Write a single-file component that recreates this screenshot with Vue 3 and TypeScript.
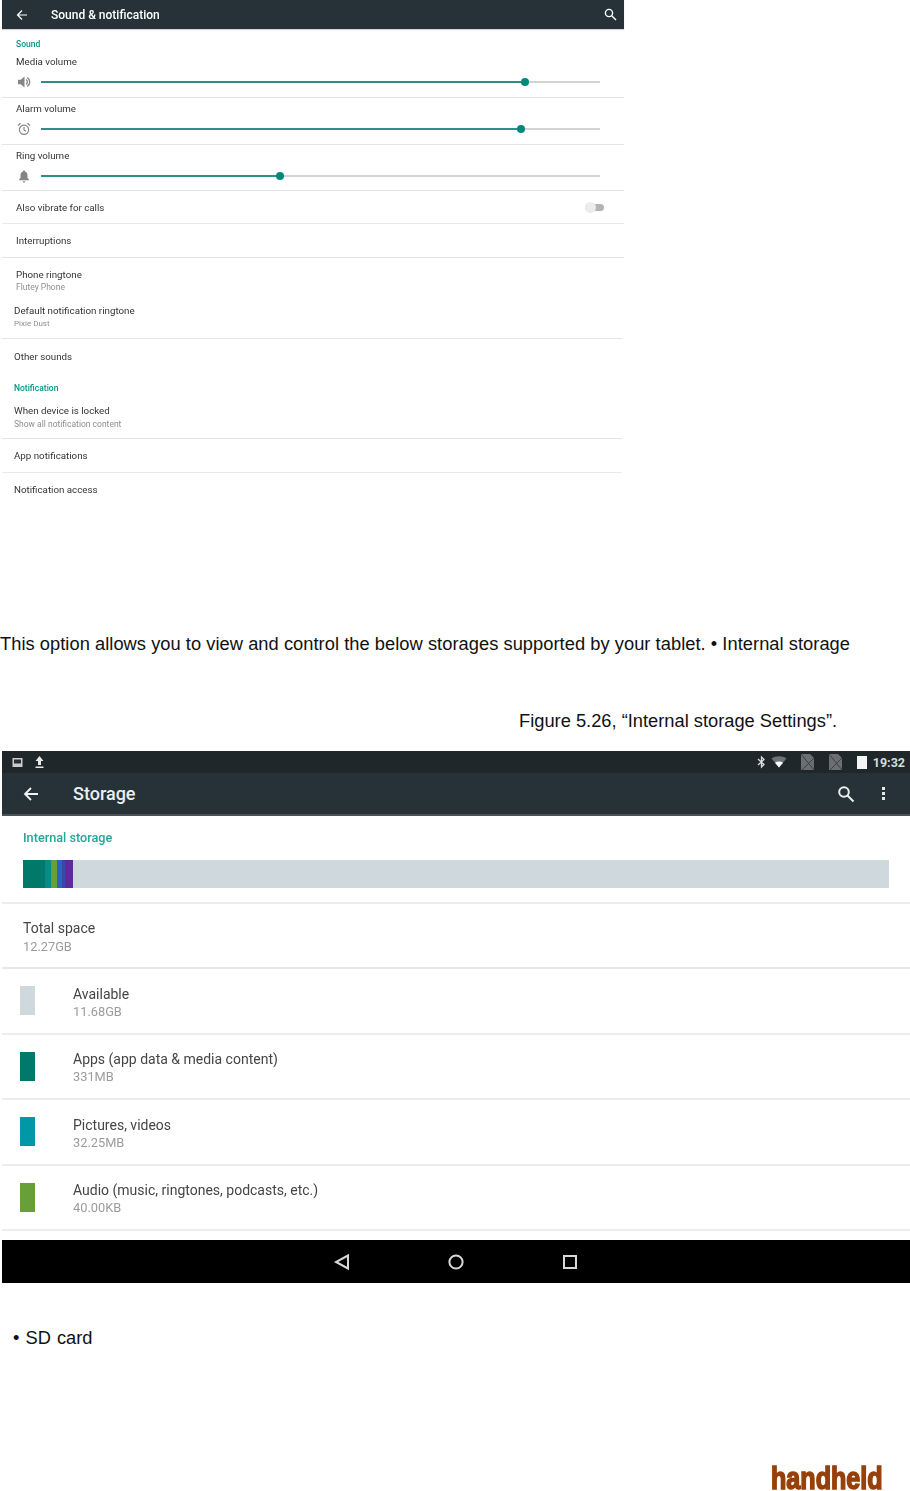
<script setup lang="ts">
interface Slider {
  label: string;
  icon: 'speaker' | 'alarm' | 'bell';
  value: number;
}

interface StorageRow {
  label: string;
  size: string;
  color: string;
}

const sliders: Slider[] = [
  { label: 'Media volume', icon: 'speaker', value: 86.6 },
  { label: 'Alarm volume', icon: 'alarm', value: 85.9 },
  { label: 'Ring volume', icon: 'bell', value: 42.8 },
];

const storageRows: StorageRow[] = [
  { label: 'Available', size: '11.68GB', color: '#cfd8dc' },
  { label: 'Apps (app data & media content)', size: '331MB', color: '#00796b' },
  { label: 'Pictures, videos', size: '32.25MB', color: '#0097a7' },
  { label: 'Audio (music, ringtones, podcasts, etc.)', size: '40.00KB', color: '#689f38' },
];
</script>

<template>
  <div class="page">
    <section class="sound">
      <header class="sound-bar">
        <svg class="sound-back" width="12" height="12" viewBox="0 0 12 12" fill="none" stroke="#fff" stroke-width="1.2">
          <path d="M11 6H1.500M6 1.500L1.500 6 6 10.500" />
        </svg>
        <span class="sound-title">Sound &amp; notification</span>
        <svg class="sound-search" width="13" height="13" viewBox="0 0 13 13" fill="none" stroke="#fff" stroke-width="1.400">
          <circle cx="5" cy="5" r="3.600" />
          <path d="M7.700 7.700L12 12" />
        </svg>
      </header>

      <div class="group-a">
        <p class="section-label first">Sound</p>
        <div v-for="s in sliders" :key="s.label" class="slider-row">
          <p class="row-text">{{ s.label }}</p>
          <div class="slider-line">
            <svg class="slider-icon" width="14" height="14" viewBox="0 0 14 14" fill="#858585">
              <template v-if="s.icon === 'speaker'">
                <path d="M1 4.800H3.800L7.500 1.500v11L3.800 9.200H1z" />
                <path d="M9 4.500a3 3 0 0 1 0 5M10.300 2.600a5.200 5.200 0 0 1 0 8.800" fill="none" stroke="#858585" stroke-width="1.300" />
              </template>
              <template v-else-if="s.icon === 'alarm'">
                <circle cx="7" cy="7.800" r="4.600" fill="none" stroke="#858585" stroke-width="1.200" />
                <path d="M7 5v3l2 1.200M1 3.500L3.500 1.300M13 3.500L10.500 1.300" fill="none" stroke="#858585" stroke-width="1.200" />
              </template>
              <template v-else>
                <path d="M7 1.500c.6 0 1 .4 1 1 1.700.5 2.500 2 2.500 3.700v2.800l1.500 1.500v.7H2v-.7L3.500 9V6.200C3.500 4.500 4.300 3 6 2.500c0-.6.4-1 1-1zM5.700 12.200h2.600c0 .7-.6 1.300-1.300 1.300s-1.300-.6-1.300-1.300z" />
              </template>
            </svg>
            <div class="track">
              <div class="track-fill" :style="{ width: s.value + '%' }"></div>
              <div class="track-thumb" :style="{ left: s.value + '%' }"></div>
            </div>
          </div>
        </div>

        <div class="plain-row vibrate">
          <span class="row-text">Also vibrate for calls</span>
          <span class="toggle"><span class="toggle-knob"></span></span>
        </div>
        <div class="plain-row interruptions">
          <span class="row-text">Interruptions</span>
        </div>
        <div class="ringtone">
          <p class="row-text">Phone ringtone</p>
          <p class="row-sub">Flutey Phone</p>
        </div>
      </div>

      <div class="group-b">
        <div class="ringtone second">
          <p class="row-text">Default notification ringtone</p>
          <p class="row-sub tiny">Pixie Dust</p>
        </div>
        <div class="other"><span class="row-text">Other sounds</span></div>
        <p class="section-label">Notification</p>
        <div class="locked">
          <p class="row-text">When device is locked</p>
          <p class="row-sub">Show all notification content</p>
        </div>
        <div class="plain-row app-notes"><span class="row-text">App notifications</span></div>
        <div class="plain-row access"><span class="row-text">Notification access</span></div>
      </div>
    </section>

    <p class="doc-line intro">This option allows you to view and control the below storages supported by your tablet. • Internal storage</p>
    <p class="doc-line figure">Figure 5.26, “Internal storage Settings”.</p>

    <section class="storage">
      <div class="status">
        <div class="status-left">
          <svg width="13" height="13" viewBox="0 0 13 13">
            <rect x="1.500" y="2" width="10" height="9" fill="#c9cdcf" />
            <rect x="3" y="3.500" width="7" height="4" fill="#2b2f32" />
          </svg>
          <svg width="13" height="14" viewBox="0 0 13 14" fill="#e8e8e8">
            <path d="M6.500 1L10.500 6H8v4H5V6H2.500zM2.500 11.500h8V13h-8z" />
          </svg>
        </div>
        <div class="status-right">
          <svg width="11" height="14" viewBox="0 0 11 14" fill="none" stroke="#dcdcdc" stroke-width="1.300">
            <path d="M2 4l6 5.500L5.500 12V2L8 4.500 2 10" />
          </svg>
          <svg class="wifi" width="16" height="12" viewBox="0 0 16 12">
            <path d="M0.500 2.500C4.500-.5 11.500-.5 15.500 2.500L8 11.500z" fill="#6d7376" />
            <path d="M4 6.700C6.200 5.200 9.800 5.200 12 6.700L8 11.500z" fill="#fff" />
          </svg>
          <svg class="sim" width="15" height="18" viewBox="0 0 15 18">
            <path d="M1 1h9l4 4v12H1z" fill="#6b6f72" />
            <path d="M1 1l13 16M14 5L2 17" stroke="#3c4043" stroke-width="1" fill="none" />
          </svg>
          <svg class="sim" width="15" height="18" viewBox="0 0 15 18">
            <path d="M1 1h9l4 4v12H1z" fill="#6b6f72" />
            <path d="M1 1l13 16M14 5L2 17" stroke="#3c4043" stroke-width="1" fill="none" />
          </svg>
          <span class="battery"></span>
          <span class="clock">19:32</span>
        </div>
      </div>

      <header class="storage-bar">
        <svg class="storage-back" width="16" height="16" viewBox="0 0 16 16" fill="none" stroke="#f2f2f2" stroke-width="1.800">
          <path d="M15 8H2M8 2L2 8l6 6" />
        </svg>
        <span class="storage-title">Storage</span>
        <svg class="storage-search" width="18" height="18" viewBox="0 0 18 18" fill="none" stroke="#eceff0" stroke-width="2">
          <circle cx="7" cy="7" r="4.800" />
          <path d="M10.500 10.500L16.500 16.500" />
        </svg>
        <span class="dots"><i></i><i></i><i></i></span>
      </header>

      <div class="storage-head">
        <p class="storage-label">Internal storage</p>
        <div class="usage">
          <span class="usage-part" style="width: 22px; background: #00796b"></span>
          <span class="usage-part" style="width: 6px; background: #0a8a86"></span>
          <span class="usage-part" style="width: 6px; background: #689f38"></span>
          <span class="usage-part" style="width: 5px; background: #2d62c4"></span>
          <span class="usage-part" style="width: 3px; background: #3949ab"></span>
          <span class="usage-part" style="width: 8px; background: #5e2a9c"></span>
        </div>
      </div>

      <div class="total">
        <p class="storage-name">Total space</p>
        <p class="storage-size">12.27GB</p>
      </div>

      <div v-for="r in storageRows" :key="r.label" class="storage-row">
        <span class="swatch" :style="{ background: r.color }"></span>
        <div class="storage-text">
          <p class="storage-name">{{ r.label }}</p>
          <p class="storage-size">{{ r.size }}</p>
        </div>
      </div>

      <footer class="nav">
        <svg width="18" height="18" viewBox="0 0 18 18" fill="none" stroke="#d8d8d8" stroke-width="2">
          <path d="M15 2.500v13L3 9z" />
        </svg>
        <svg width="18" height="18" viewBox="0 0 18 18" fill="none" stroke="#d8d8d8" stroke-width="2">
          <circle cx="9" cy="9" r="6.600" />
        </svg>
        <svg width="18" height="18" viewBox="0 0 18 18" fill="none" stroke="#d8d8d8" stroke-width="2">
          <rect x="3" y="3" width="12" height="12" />
        </svg>
      </footer>
    </section>

    <p class="doc-line bullet">• SD card</p>
    <div class="brand"><span class="brand-text">handheld</span></div>
  </div>
</template>

<style>
html,
body {
  margin: 0;
  background: #fff;
}
</style>

<style scoped>
p {
  margin: 0;
}

.page {
  position: relative;
  width: 910px;
  height: 1491px;
  overflow: hidden;
  background: #fff;
  font-family: Roboto, "Liberation Sans", sans-serif;
}

/* first screenshot */
.sound {
  width: 622px;
  height: 616px;
  margin-left: 2px;
  filter: blur(0.3px);
}

.sound-bar {
  display: flex;
  align-items: center;
  height: 29px;
  background: #263238;
  box-shadow: 0 1px 1px #d5d5d5;
  color: #fff;
}

.sound-back {
  margin-left: 14px;
}

.sound-title {
  margin-left: 23px;
  font-size: 12px;
  font-weight: 500;
}

.sound-search {
  margin-left: auto;
  margin-right: 7px;
}

.row-text {
  font-size: 9.750px;
  line-height: 14px;
  color: #333;
}

.row-sub {
  font-size: 8.500px;
  line-height: 11px;
  color: #8f8f8f;
}

.row-sub.tiny {
  font-size: 8px;
}

.section-label {
  font-size: 8.500px;
  font-weight: 500;
  line-height: 12px;
  color: #009688;
}

.group-a {
  padding-top: 9px;
}

.group-a .section-label,
.group-a .row-text,
.group-a .row-sub {
  margin-left: 14px;
}

.section-label.first {
  margin-bottom: 1px;
}

.slider-row {
  height: 47px;
  box-sizing: border-box;
  padding-top: 4px;
  border-bottom: 1px solid #e4e4e4;
}

.slider-row:nth-child(4) {
  height: 46px;
}

.slider-row .row-text {
  margin-bottom: 6px;
}

.slider-line {
  display: flex;
  align-items: center;
  height: 14px;
  padding-left: 15px;
}

.slider-icon {
  flex: none;
}

.track {
  position: relative;
  width: 559px;
  height: 2px;
  margin-left: 10px;
  background: #d4d4d4;
}

.track-fill {
  position: absolute;
  left: 0;
  top: 0;
  height: 2px;
  background: #2b8f86;
}

.track-thumb {
  position: absolute;
  top: -3px;
  width: 8px;
  height: 8px;
  margin-left: -4px;
  border-radius: 50%;
  background: #00897b;
}

.plain-row {
  display: flex;
  align-items: center;
  justify-content: space-between;
  box-sizing: border-box;
  border-bottom: 1px solid #eaeaea;
}

.vibrate {
  height: 33px;
  padding-top: 1px;
  padding-right: 20px;
}

.toggle {
  position: relative;
  width: 19px;
  height: 7px;
  border-radius: 4px;
  background: #b3b3b3;
}

.toggle-knob {
  position: absolute;
  left: 0;
  top: -2px;
  width: 11px;
  height: 11px;
  border-radius: 50%;
  background: #ececec;
}

.interruptions {
  height: 34px;
  padding-top: 1px;
  border-bottom-color: #e4e4e4;
}

.ringtone {
  height: 46px;
  box-sizing: border-box;
  padding-top: 10px;
}

.group-b {
  width: 620px;
  margin-left: -2px;
  padding-left: 2px;
}

.group-b .row-text,
.group-b .row-sub,
.group-b .section-label {
  margin-left: 12px;
}

.ringtone.second {
  height: 35px;
  padding-top: 0;
  border-bottom: 1px solid #e4e4e4;
}

.other {
  display: flex;
  align-items: center;
  height: 35px;
}

.group-b .section-label {
  margin-top: 8px;
}

.locked {
  height: 45px;
  box-sizing: border-box;
  padding-top: 10px;
  border-bottom: 1px solid #e4e4e4;
}

.locked .row-sub {
  margin-top: 1px;
}

.app-notes {
  height: 34px;
}

.access {
  height: 34px;
  border-bottom: 0;
}

/* text of the document */
.doc-line {
  font-family: "Liberation Sans", Arial, sans-serif;
  font-size: 18.300px;
  line-height: 22px;
  color: #111;
  white-space: nowrap;
}

.intro {
  margin-top: 17px;
  letter-spacing: 0.040px;
}

.figure {
  margin-top: 55px;
  margin-left: 519px;
}

.bullet {
  margin-top: 44px;
  margin-left: 13px;
  word-spacing: 1px;
}

/* second screenshot */
.storage {
  width: 908px;
  margin-top: 19px;
  margin-left: 2px;
  filter: blur(0.5px);
}

.status {
  display: flex;
  align-items: center;
  justify-content: space-between;
  height: 22px;
  background: #1f272b;
}

.status-left {
  display: flex;
  align-items: center;
  gap: 9px;
  padding-left: 9px;
}

.status-right {
  display: flex;
  align-items: center;
  padding-right: 5px;
}

.wifi {
  margin-left: 4px;
}

.sim {
  margin-left: 13px;
}

.battery {
  width: 10px;
  height: 13px;
  margin-left: 14px;
  background: #f4f4f4;
}

.clock {
  margin-left: 6px;
  font-size: 12.500px;
  font-weight: 700;
  color: #d8dcde;
}

.storage-bar {
  display: flex;
  align-items: center;
  height: 41px;
  background: #263238;
  border-bottom: 2px solid #4a5257;
}

.storage-back {
  margin-left: 21px;
}

.storage-title {
  margin-left: 34px;
  font-size: 18px;
  font-weight: 500;
  color: #eceff1;
}

.storage-search {
  margin-left: auto;
}

.dots {
  display: flex;
  flex-direction: column;
  gap: 2px;
  margin-left: 27px;
  margin-right: 25px;
}

.dots i {
  display: block;
  width: 3px;
  height: 3px;
  background: #e4e7e8;
}

.storage-head {
  height: 88px;
  box-sizing: border-box;
  padding: 14px 21px 0;
  border-bottom: 2px solid #ececec;
}

.storage-label {
  font-size: 12.700px;
  font-weight: 500;
  line-height: 16px;
  color: #26a69a;
}

.usage {
  display: flex;
  width: 866px;
  height: 28px;
  margin-top: 14px;
  background: #cfd8dc;
}

.usage-part {
  display: block;
  height: 100%;
}

.total {
  height: 65px;
  box-sizing: border-box;
  padding: 14px 21px 0;
  border-bottom: 2px solid #e8e8e8;
}

.total .storage-size {
  margin-top: 1px;
}

.storage-name {
  font-size: 14px;
  line-height: 20px;
  color: #454545;
}

.storage-size {
  font-size: 12.800px;
  line-height: 16px;
  color: #9c9c9c;
}

.storage-row {
  display: flex;
  align-items: center;
  height: 65.500px;
  box-sizing: border-box;
  border-bottom: 2px solid #ededed;
}

.storage-text {
  padding-top: 2px;
}

.swatch {
  flex: none;
  width: 15px;
  height: 29px;
  margin-left: 18px;
  margin-right: 38px;
}

.nav {
  display: flex;
  align-items: center;
  justify-content: center;
  gap: 96px;
  height: 43px;
  margin-top: 9px;
  background: #000;
}

/* logo */
.brand {
  position: absolute;
  left: 771px;
  top: 1467px;
}

.brand-text {
  display: block;
  font-family: "Liberation Sans", Arial, sans-serif;
  font-size: 31px;
  font-weight: 700;
  line-height: 24px;
  color: #97400a;
  -webkit-text-stroke: 1.600px #97400a;
  transform: scaleX(0.81);
  transform-origin: left top;
}
</style>
